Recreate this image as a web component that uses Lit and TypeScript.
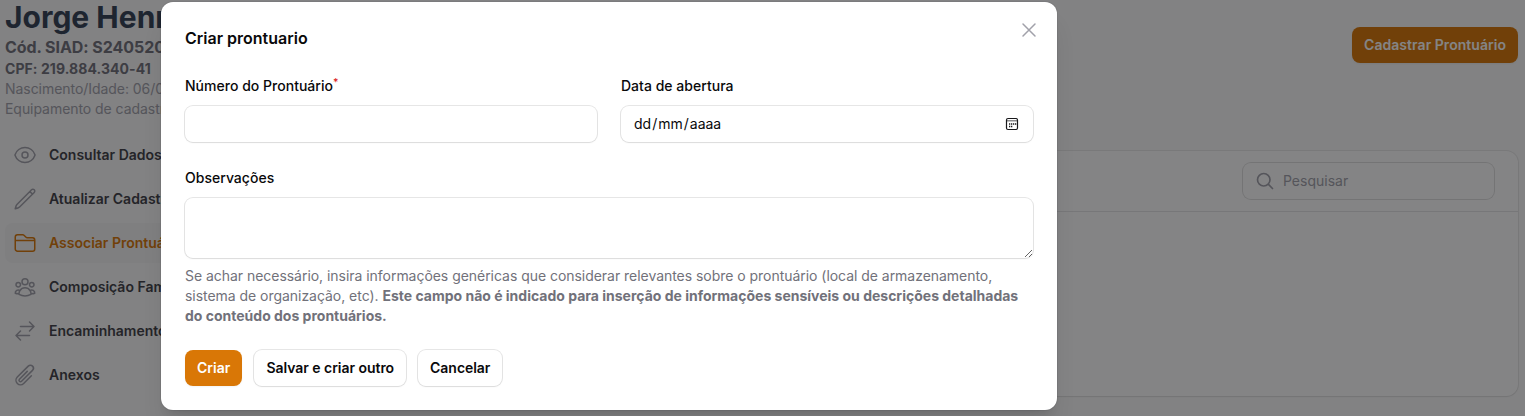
import { LitElement, html, css, svg } from "lit";
import { customElement } from "lit/decorators.js";

const stroke = (d: string[]) => html`<svg class="icon" viewBox="0 0 24 24" fill="none" stroke="currentColor" stroke-width="1.5" stroke-linecap="round" stroke-linejoin="round" aria-hidden="true">${d.map((p) => svg`<path d=${p}></path>`)}</svg>`;

const icons: Record<string, string[]> = {
  eye: [
    "M2.036 12.322a1.012 1.012 0 0 1 0-.639C3.423 7.51 7.36 4.5 12 4.5c4.638 0 8.573 3.007 9.963 7.178.07.207.07.431 0 .639C20.577 16.49 16.64 19.5 12 19.5c-4.638 0-8.573-3.007-9.963-7.178Z",
    "M15 12a3 3 0 1 1-6 0 3 3 0 0 1 6 0Z",
  ],
  pencil: ["m16.862 4.487 1.687-1.688a1.875 1.875 0 1 1 2.652 2.652L6.832 19.82a4.5 4.5 0 0 1-1.897 1.13l-2.685.8.8-2.685a4.5 4.5 0 0 1 1.13-1.897L16.863 4.487Zm0 0L19.5 7.125"],
  folder: ["M2.25 9.6h19.5M2.25 18V6A2.25 2.25 0 0 1 4.5 3.75h5.379a1.5 1.5 0 0 1 1.06.44l2.122 2.12a1.5 1.5 0 0 0 1.06.44H19.5A2.25 2.25 0 0 1 21.75 9v9a2.25 2.25 0 0 1-2.25 2.25h-15A2.25 2.25 0 0 1 2.25 18Z"],
  users: ["M18 18.72a9.094 9.094 0 0 0 3.741-.479 3 3 0 0 0-4.682-2.72m.94 3.198.001.031c0 .225-.012.447-.037.666A11.944 11.944 0 0 1 12 21c-2.17 0-4.207-.576-5.963-1.584A6.062 6.062 0 0 1 6 18.719m12 0a5.971 5.971 0 0 0-.941-3.197m0 0A5.995 5.995 0 0 0 12 12.75a5.995 5.995 0 0 0-5.058 2.772m0 0a3 3 0 0 0-4.681 2.72 8.986 8.986 0 0 0 3.74.477m.94-3.197a5.971 5.971 0 0 0-.94 3.197M15 6.75a3 3 0 1 1-6 0 3 3 0 0 1 6 0Zm6 3a2.25 2.25 0 1 1-4.5 0 2.25 2.25 0 0 1 4.5 0Zm-13.5 0a2.25 2.25 0 1 1-4.5 0 2.25 2.25 0 0 1 4.5 0Z"],
  arrows: ["M7.5 21 3 16.5m0 0L7.5 12M3 16.5h13.5m0-13.5L21 7.5m0 0L16.5 12M21 7.5H7.5"],
  clip: ["m18.375 12.739-7.693 7.693a4.5 4.5 0 0 1-6.364-6.364l10.94-10.94A3 3 0 1 1 19.5 7.372L8.552 18.32m.009-.01-.01.01m5.699-9.941-7.81 7.81a1.5 1.5 0 0 0 2.112 2.13"],
  search: ["m21 21-5.197-5.197m0 0A7.5 7.5 0 1 0 5.196 5.196a7.5 7.5 0 0 0 10.607 10.607Z"],
  close: ["M6 18 18 6M6 6l12 12"],
};

const nav = [
  { icon: "eye", label: "Consultar Dados" },
  { icon: "pencil", label: "Atualizar Cadastro" },
  { icon: "folder", label: "Associar Prontuário", active: true },
  { icon: "users", label: "Composição Familiar" },
  { icon: "arrows", label: "Encaminhamentos" },
  { icon: "clip", label: "Anexos" },
];

@customElement("app-root")
export class AppRoot extends LitElement {
  static styles = css`
    :host { display: block; position: relative; height: 416px; overflow: hidden; background: #fafafa; font: 14px/20px Inter, sans-serif; color: #09090b; }
    * { box-sizing: border-box; }
    .icon { width: 24px; height: 24px; flex: none; display: block; }
    .page { display: grid; grid-template-columns: 282px 1fr; height: 416px; padding: 0 7px 0 5px; column-gap: 24px; }
    .side { min-width: 0; white-space: nowrap; }
    h1 { margin: 0; font-size: 30px; line-height: 35px; font-weight: 700; color: #334155; }
    .code { font-size: 16px; line-height: 24px; font-weight: 700; color: #71717a; letter-spacing: -.06px; }
    .cpf { font-weight: 700; color: #71717a; letter-spacing: .07px; }
    .meta { color: #a1a1aa; letter-spacing: -.05px; }
    nav { display: flex; flex-direction: column; gap: 4px; padding-top: 16px; }
    .item { display: flex; align-items: center; gap: 12px; height: 40px; padding: 8px; border-radius: 8px; font-weight: 600; color: #3f3f46; }
    .item .icon { color: #a1a1aa; }
    .item.active { background: #f4f4f5; color: #d97706; }
    .item.active .icon { color: #d97706; }
    .main { padding-top: 27px; display: flex; flex-direction: column; align-items: stretch; }
    .btn { font: 600 14px/20px Inter, sans-serif; letter-spacing: -.04px; border: 0; margin: 0; padding: 8px 12px; height: 36px; border-radius: 8px; background: #fff; color: #09090b; box-shadow: 0 0 0 1px rgba(9,9,11,.1), 0 1px 2px rgba(0,0,0,.05); white-space: nowrap; }
    .btn.primary { background: #d97706; color: #fff; letter-spacing: .04px; box-shadow: 0 1px 2px rgba(0,0,0,.05); }
    .main > .btn { align-self: flex-end; }
    .card { margin-top: 88px; height: 245px; border-radius: 12px; background: #fff; box-shadow: 0 0 0 1px rgba(9,9,11,.07), 0 1px 2px rgba(0,0,0,.05); }
    .bar { display: flex; justify-content: flex-end; padding: 12px 24px; border-bottom: 1px solid #e4e4e7; }
    .search { display: flex; align-items: center; gap: 8px; width: 251px; height: 36px; padding: 0 12px; border-radius: 8px; color: #a1a1aa; box-shadow: 0 0 0 1px rgba(9,9,11,.13); }
    .search .icon { width: 20px; height: 20px; stroke-width: 2; }
    .overlay { position: absolute; inset: 0; background: rgba(9,9,11,.5); padding: 2px 0 0 161px; }
    .modal { position: relative; width: 896px; height: 408px; border-radius: 12px; background: #fff; padding: 24px; box-shadow: 0 0 0 1px rgba(9,9,11,.05), 0 20px 25px -5px rgba(0,0,0,.1), 0 8px 10px -6px rgba(0,0,0,.1); }
    h2 { margin: 0 0 24px; font-size: 16px; line-height: 24px; font-weight: 600; }
    .close { position: absolute; right: 16px; top: 16px; color: #a1a1aa; }
    .fields { display: grid; grid-template-columns: 1fr 1fr; gap: 24px; }
    .field { display: flex; flex-direction: column; gap: 8px; }
    .wide { grid-column: 1 / -1; }
    .label { line-height: 24px; font-weight: 500; height: 24px; letter-spacing: .02px; }
    .label sup { color: #dc2626; font-size: 10.5px; line-height: 0; position: relative; top: -.5em; vertical-align: baseline; }
    .control { height: 36px; border-radius: 8px; background: #fff; box-shadow: 0 0 0 1px rgba(9,9,11,.1), 0 1px 2px rgba(0,0,0,.05); }
    .date { display: flex; align-items: center; justify-content: space-between; padding: 0 14px 0 13px; }
    .sep { padding: 0 1px; }
    .cal { width: 14px; height: 14px; display: block; }
    textarea.control { display: block; width: 100%; height: 60px; border: 0; outline: 0; resize: vertical; margin: 0; padding: 6px 12px; font: inherit; }
    .help { margin: 0; color: #71717a; letter-spacing: -.037px; }
    .help b { letter-spacing: 0; }
    .actions { display: flex; gap: 12px; padding-top: 24px; }
  `;

  render() {
    return html`
      <div class="page">
        <aside class="side">
          <h1>Jorge Henr</h1>
          <div class="code">Cód. SIAD: S240520</div>
          <div class="cpf">CPF: 219.884.340-41</div>
          <div class="meta">Nascimento/Idade: 06/0</div>
          <div class="meta">Equipamento de cadastro</div>
          <nav>${nav.map((n) => html`<div class="item ${n.active ? "active" : ""}">${stroke(icons[n.icon])}<span>${n.label}</span></div>`)}</nav>
        </aside>
        <main class="main">
          <button class="btn primary">Cadastrar Prontuário</button>
          <section class="card"><div class="bar"><div class="search">${stroke(icons.search)}<span>Pesquisar</span></div></div></section>
        </main>
      </div>
      <div class="overlay">
        <section class="modal" role="dialog">
          <div class="close">${stroke(icons.close)}</div>
          <h2>Criar prontuario</h2>
          <div class="fields">
            <div class="field"><div class="label">Número do Prontuário<sup>*</sup></div><div class="control"></div></div>
            <div class="field">
              <div class="label">Data de abertura</div>
              <div class="control date"><span class="hint">dd<span class="sep">/</span>mm<span class="sep">/</span>aaaa</span>
                <svg class="cal" viewBox="0 0 14 14" fill="none"><path d="M2 3h10v1.5H2z" fill="#8a8a8c"/><rect x="1.5" y="1.5" width="11" height="11" rx="1.5" stroke="#18181b" stroke-width="1.2"/><path d="M6 7h1.3M8 7h1.3M10 7h1.3M4 7h1.3M4 9.5h1.3M6 9.5h1.3" stroke="#18181b" stroke-width="1.3"/></svg>
              </div>
            </div>
            <div class="field wide">
              <div class="label">Observações</div><textarea class="control"></textarea>
              <p class="help">Se achar necessário, insira informações genéricas que considerar relevantes sobre o prontuário (local de armazenamento, sistema de organização, etc). <b>Este campo não é indicado para inserção de informações sensíveis ou descrições detalhadas do conteúdo dos prontuários.</b></p>
            </div>
          </div>
          <div class="actions"><button class="btn primary">Criar</button><button class="btn">Salvar e criar outro</button><button class="btn">Cancelar</button></div>
        </section>
      </div>`;
  }
}
